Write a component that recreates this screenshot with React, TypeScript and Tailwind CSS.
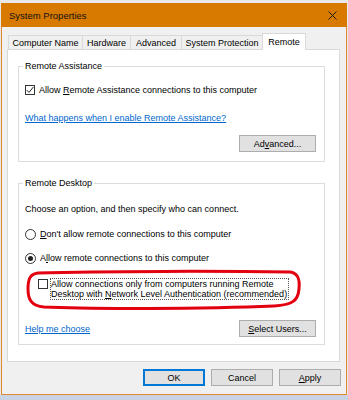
import React from 'react';

const tabs = [
  { label: 'Computer Name', w: 'w-[75px]' },
  { label: 'Hardware', w: 'w-[49px]' },
  { label: 'Advanced', w: 'w-[52px]' },
  { label: 'System Protection', w: 'w-[82px]' },
];

function Checkbox({ checked }: { checked?: boolean }) {
  return (
    <span className="w-[10px] h-[10px] shrink-0 border border-[#333] bg-white flex items-center justify-center">
      {checked && (
        <svg width="8" height="8" viewBox="0 0 8 8">
          <path d="M0.8 4.2 L3 6.4 L7.4 1" fill="none" stroke="#222" strokeWidth="1" />
        </svg>
      )}
    </span>
  );
}

function Radio({ checked }: { checked?: boolean }) {
  return (
    <span className="w-[11px] h-[11px] shrink-0 rounded-full border border-[#333] bg-white flex items-center justify-center">
      {checked && <span className="w-[5px] h-[5px] rounded-full bg-[#222]" />}
    </span>
  );
}

function Button({ children, className = '' }: { children: React.ReactNode; className?: string }) {
  return (
    <button className={`h-[17px] bg-[#e1e1e1] border border-[#adadad] text-[9px] leading-[10px] text-black flex items-center justify-center ${className}`}>
      {children}
    </button>
  );
}

export default function App() {
  return (
    <div className="w-[348px] h-[400px] bg-[#e8e8e8] pt-[3px] overflow-hidden font-['Liberation_Sans',Arial,sans-serif] text-black text-[9px] leading-[12px]">
      <div className="ml-px w-[346px] h-[392px] border border-[#e0892e] bg-[#f0f0f0] flex flex-col">
        {/* title bar */}
        <div className="h-[24px] -mt-px -mx-px bg-[#d97a00] flex items-center justify-between pl-[8px] pr-[10px]">
          <span className="text-[9.5px] text-[#111] pt-px">System Properties</span>
          <svg width="9" height="9" viewBox="0 0 9 9">
            <path d="M0.5 0.5 L8.5 8.5 M8.5 0.5 L0.5 8.5" stroke="#1a1a1a" strokeWidth="1" />
          </svg>
        </div>

        {/* tabs */}
        <div className="mt-[6px] ml-[6px] h-[16px] flex items-end relative z-10">
          {tabs.map((t, i) => (
            <div
              key={t.label}
              className={`${t.w} ${i > 0 ? '-ml-px' : ''} h-[14px] border-t border-x border-[#d9d9d9] bg-[#f0f0f0] pt-[2px] leading-[10px] text-center whitespace-nowrap`}
            >
              {t.label}
            </div>
          ))}
          <div className="-ml-px w-[44px] h-[17px] -mb-px border-t border-x border-[#d9d9d9] bg-white pt-[3px] leading-[10px] text-center">
            Remote
          </div>
        </div>

        {/* panel */}
        <div className="ml-[5px] w-[333px] h-[313px] border border-[#d9d9d9] bg-white pt-[10px] pl-[10px]">
          <fieldset className="w-[307px] border border-[#dcdcdc] pl-[6px] pr-[8px] pb-[9px]">
            <legend className="px-[2px] -ml-[2px] leading-[12px]">Remote Assistance</legend>
            <div className="pt-[12px] flex items-center gap-[4px] h-[24px]">
              <Checkbox checked />
              <span>
                Allow <u>R</u>emote Assistance connections to this computer
              </span>
            </div>
            <div className="mt-[16px] text-[#0066cc] underline">What happens when I enable Remote Assistance?</div>
            <div className="mt-[11px] flex justify-end">
              <Button className="w-[77px]">
                Ad<u>v</u>anced...
              </Button>
            </div>
          </fieldset>

          <fieldset className="mt-[15px] w-[307px] border border-[#dcdcdc] pl-[6px] pr-[8px] pb-[7px]">
            <legend className="px-[2px] -ml-[2px] leading-[12px]">Remote Desktop</legend>
            <div className="pt-[14px]">Choose an option, and then specify who can connect.</div>
            <div className="mt-[13px] flex items-center gap-[4px]">
              <Radio />
              <span>
                <u>D</u>on't allow remote connections to this computer
              </span>
            </div>
            <div className="mt-[12px] flex items-center gap-[4px]">
              <Radio checked />
              <span>
                A<u>l</u>low remote connections to this computer
              </span>
            </div>
            <div className="relative mt-[14px] ml-[13px] flex items-start gap-[2px]">
              <span className="mt-px">
                <Checkbox />
              </span>
              <span className="w-[239px] border border-dotted border-[#555] leading-[10px] whitespace-nowrap">
                Allow connections only from computers running Remote
                <br />
                Desktop with <u>N</u>etwork Level Authentication (recommended)
              </span>
              <svg className="absolute left-[-14px] top-[-9px] pointer-events-none" width="280" height="42" viewBox="0 0 280 42">
                <path
                  d="M14 4 C80 2 200 2 266 3 C274 4 276 10 275 20 C274 32 268 36 250 37 C180 40 60 40 20 38 C7 37 4 30 4 20 C4 10 6 5 14 4 Z"
                  fill="none"
                  stroke="#e3000f"
                  strokeWidth="3"
                />
              </svg>
            </div>
            <div className="mt-[20px] flex items-center justify-between">
              <span className="text-[#0066cc] underline">Help me choose</span>
              <Button className="w-[77px]">
                <u>S</u>elect Users...
              </Button>
            </div>
          </fieldset>
        </div>

        {/* bottom buttons */}
        <div className="mt-[7px] pr-[5px] flex justify-end gap-[6px]">
          <Button className="w-[62px] !border-2 !border-[#0078d7]">OK</Button>
          <Button className="w-[62px]">Cancel</Button>
          <Button className="w-[62px]">
            <u>A</u>pply
          </Button>
        </div>
      </div>
      <div className="h-[5px] bg-[#c9d3e4]" />
    </div>
  );
}
